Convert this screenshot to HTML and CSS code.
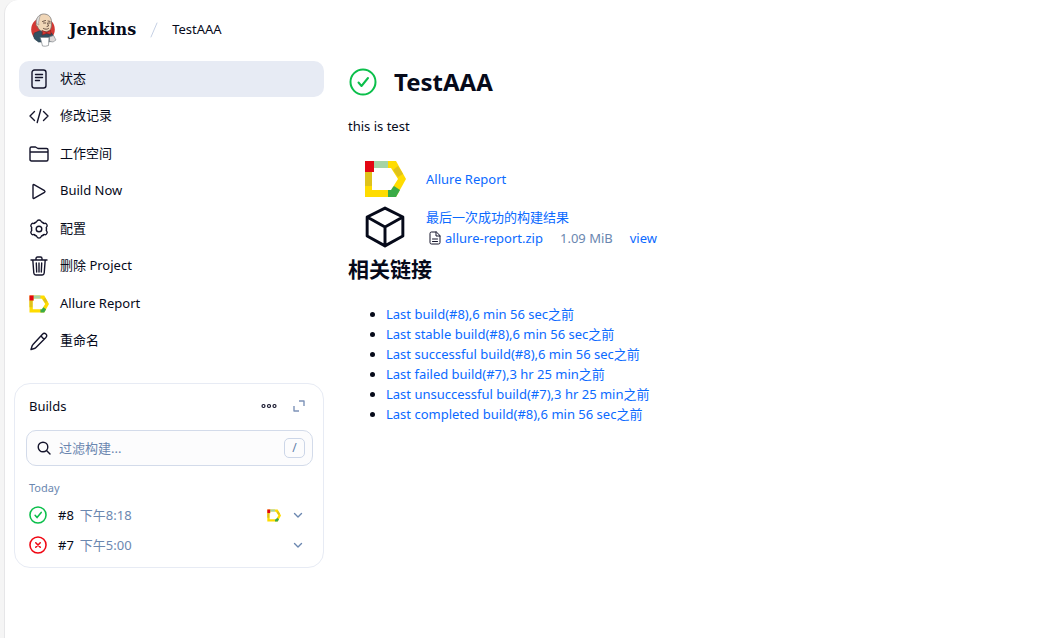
FILE: index.html
```html
<!DOCTYPE html>
<html lang="zh-CN">
<head>
  <meta charset="utf-8">
  <title>TestAAA [Jenkins]</title>
  <link rel="stylesheet" href="styles.css">
</head>
<body>

<!-- shared icons -->
<svg class="sprite" aria-hidden="true">
  <symbol id="allure" viewBox="0 0 42 38">
    <path fill="#ffdc00" d="M1 1h31l10 18-10 18H1z"/>
    <path fill="#e30613" d="M1 1h9v11H1z"/>
    <path fill="#a5d3a5" d="M10 1h14v7H10z"/>
    <path fill="#dfc21b" d="M1 12h7v14H1zM29 10l5-4 5 8-5 3z"/>
    <path fill="#3aab47" d="M24 30l6-4 6 4-4 7h-8z"/>
    <path fill="#fff" d="M10 12V8h17l7 11-7 11H8V12z"/>
  </symbol>
  <symbol id="success" viewBox="0 0 28 28">
    <circle cx="14" cy="14" r="12.5"/>
    <path d="M9.5 14.5l3 3.5 6.5-8"/>
  </symbol>
  <symbol id="chevron" viewBox="0 0 10 10">
    <path d="M1.5 3.5L5 7l3.5-3.5"/>
  </symbol>
</svg>

<div class="page">
  <header class="header">
    <a class="brand" href="#">
      <svg class="logo" viewBox="0 0 26 34">
        <ellipse cx="12.500" cy="16.500" rx="11.800" ry="12" fill="#d33833"/>
        <path fill="#335061" stroke="#263b49" stroke-width=".6" d="M4 20l6-2.500 5 3 6-.5 2.500 4-1 4-5 1H8l-4-3-1-3z"/>
        <path fill="#f0d6b7" stroke="#6d6b6d" stroke-width=".7" d="M6 7c1-4.500 5-6.300 8-6 4.500.4 7 3.500 7 8s.3 9-5.500 9.500C11 19 8 17 7 13.500 5.500 13 5 11 6 10z"/>
        <path fill="#dfdedc" stroke="#8a8584" stroke-width=".5" d="M5.700 9c.3-4 2.300-6.500 4.300-7-1 2-1 3.500-1.500 5.500-.5 1.500-.5 3 0 4.500-1.800-.5-2.600-1.500-2.800-3z"/>
        <path fill="none" stroke="#49332b" stroke-width=".8" d="M12 8.500l3-1M17.500 8l2 .4M13 10h2.200M18 10h1.700M17 10l1 3-1.500.5M13 15.500c2 1 3.500 1 5 0"/>
        <path fill="#d33833" stroke="#701b18" stroke-width=".5" d="M12 17.500l4 2 4-2 .5 4-4.500-1-4 1.500z"/>
        <path fill="#dcd9d8" stroke="#81868b" stroke-width=".6" d="M19 24l4-1.500L25.500 27l-3 2-3.500-.5z"/>
        <path fill="#fff" stroke="#81868b" stroke-width=".7" d="M10 24.500h8.500L18 32.500q-3 1.200-6 .5l-1-4z"/>
      </svg>
      <span>Jenkins</span>
    </a>
    <span class="slash">
      <svg viewBox="0 0 8 16"><path d="M7 1L1 15"/></svg>
    </span>
    <a class="crumb" href="#">TestAAA</a>
  </header>

  <div class="columns">
    <aside class="side">
      <nav class="tasks">
        <a class="task active" href="#">
          <svg class="icon" viewBox="0 0 20 20"><rect x="3" y="1" width="14" height="18" rx="2.500"/><path d="M6.500 5.500h7M6.500 8.500h7M6.500 11.500h4"/></svg>
          <span>状态</span>
        </a>
        <a class="task" href="#">
          <svg class="icon" viewBox="0 0 20 20"><path d="M5.500 5.500L1 10l4.500 4.500M14.500 5.500L19 10l-4.500 4.500M11.800 3.500L8.200 16.500"/></svg>
          <span>修改记录</span>
        </a>
        <a class="task" href="#">
          <svg class="icon" viewBox="0 0 20 20"><path d="M1 15V4.500Q1 3 2.500 3h4L9 4.500h8.500Q19 4.500 19 6v9.500q0 1.500-1.500 1.500h-15Q1 17 1 15.500zM1 8h18"/></svg>
          <span>工作空间</span>
        </a>
        <a class="task" href="#">
          <svg class="icon" viewBox="0 0 20 20"><path d="M4 4.200v12.600q0 1 1 .5l10.500-6q1-.8 0-1.600L5 3.700q-1-.5-1 .5z"/></svg>
          <span>Build Now</span>
        </a>
        <a class="task" href="#">
          <svg class="icon" viewBox="0 0 20 20">
            <path id="lobe" d="M6.250 3.500Q7.700 3.400 8 2.200 8.300 1 10 1t2 1.200q.3 1.200 1.750 1.300"/>
            <use href="#lobe" transform="rotate(60 10 10)"/>
            <use href="#lobe" transform="rotate(120 10 10)"/>
            <use href="#lobe" transform="rotate(180 10 10)"/>
            <use href="#lobe" transform="rotate(240 10 10)"/>
            <use href="#lobe" transform="rotate(300 10 10)"/>
            <circle cx="10" cy="10" r="2.800"/>
          </svg>
          <span>配置</span>
        </a>
        <a class="task" href="#">
          <svg class="icon" viewBox="0 0 20 20"><path d="M2 4h16M3.800 4l1 13q.2 2 2 2h6.400q1.800 0 2-2l1-13M7 4V2.500Q7 1 8.500 1h3Q13 1 13 2.500V4M7.300 7l.4 9M10 7v9M12.700 7l-.4 9"/></svg>
          <span>删除 Project</span>
        </a>
        <a class="task" href="#">
          <svg class="icon allure"><use href="#allure"/></svg>
          <span>Allure Report</span>
        </a>
        <a class="task" href="#">
          <svg class="icon" viewBox="0 0 20 20"><path d="M13.500 3.200q1.700-1.700 3.400-.1t0 3.400L7 16.500q-.7.700-1.700 1L2 18.500l1-3.300q.3-1 1-1.700zM12 5l3 3.200"/></svg>
          <span>重命名</span>
        </a>
      </nav>

      <section class="builds">
        <div class="builds-head">
          <h2>Builds</h2>
          <button class="tool" aria-label="More">
            <svg class="dots" viewBox="0 0 16 6"><circle cx="2.500" cy="3" r="1.500"/><circle cx="8" cy="3" r="1.500"/><circle cx="13.500" cy="3" r="1.500"/></svg>
          </button>
          <button class="tool" aria-label="Expand">
            <svg class="expand" viewBox="0 0 12 12"><path d="M6 1h5v5M6 11H1V6"/></svg>
          </button>
        </div>
        <label class="search">
          <svg viewBox="0 0 14 14"><circle cx="6" cy="6" r="4.800"/><path d="M9.500 9.500L13 13"/></svg>
          <input type="text" placeholder="过滤构建..." aria-label="过滤构建">
          <kbd>/</kbd>
        </label>
        <p class="day">Today</p>
        <div class="build">
          <svg class="status ok"><use href="#success"/></svg>
          <a href="#">#8</a>
          <time>下午8:18</time>
          <svg class="badge"><use href="#allure"/></svg>
          <button class="more" aria-label="#8"><svg><use href="#chevron"/></svg></button>
        </div>
        <div class="build">
          <svg class="status fail" viewBox="0 0 28 28"><circle cx="14" cy="14" r="12.500"/><path d="M10.500 10.500l7 7M17.500 10.500l-7 7"/></svg>
          <a href="#">#7</a>
          <time>下午5:00</time>
          <button class="more" aria-label="#7"><svg><use href="#chevron"/></svg></button>
        </div>
      </section>
    </aside>

    <main class="main">
      <div class="title">
        <svg class="ok"><use href="#success"/></svg>
        <h1>TestAAA</h1>
      </div>
      <p class="description">this is test</p>

      <div class="summary">
        <svg class="big-allure"><use href="#allure"/></svg>
        <a href="#">Allure Report</a>
        <svg class="box" viewBox="0 0 40 40"><path d="M20 2l17 8.500v18L20 38 3 28.500v-18zM3 10.500L20 20l17-9.500M20 20v18"/></svg>
        <div>
          <a href="#">最后一次成功的构建结果</a>
          <div class="artifact">
            <svg class="file" viewBox="0 0 12 14"><path d="M7 1H2.500Q1 1 1 2.500v9Q1 13 2.500 13h7q1.500 0 1.500-1.500V5zM7 1v4h4M3.500 8h5M3.500 10.500h5"/></svg>
            <a href="#">allure-report.zip</a>
            <span class="size">1.09 MiB</span>
            <a href="#">view</a>
          </div>
        </div>
      </div>

      <h2 class="links-title">相关链接</h2>
      <ul class="links">
        <li><a href="#">Last build(#8),6 min 56 sec之前</a></li>
        <li><a href="#">Last stable build(#8),6 min 56 sec之前</a></li>
        <li><a href="#">Last successful build(#8),6 min 56 sec之前</a></li>
        <li><a href="#">Last failed build(#7),3 hr 25 min之前</a></li>
        <li><a href="#">Last unsuccessful build(#7),3 hr 25 min之前</a></li>
        <li><a href="#">Last completed build(#8),6 min 56 sec之前</a></li>
      </ul>
    </main>
  </div>
</div>

</body>
</html>
```
FILE: styles.css
```css
* {
  box-sizing: border-box;
}

body {
  margin: 0;
  padding-left: 4px;
  background: #f5f5f5;
  color: #060a1a;
  font: 13px/20px "Noto Sans", "Noto Sans CJK SC", sans-serif;
}

a {
  color: #0b6aff;
  text-decoration: none;
}

svg {
  display: block;
  flex: none;
  fill: none;
  stroke-linecap: round;
  stroke-linejoin: round;
}

h1, h2, p, ul {
  margin: 0;
}

button {
  padding: 0;
  border: 0;
  background: none;
}

.sprite {
  position: absolute;
  width: 0;
  height: 0;
}

.page {
  min-height: 100vh;
  border-left: 1px solid #e6e6e8;
  border-radius: 14px 0 0 0;
  background: #fff;
}

/* header */
.header {
  display: flex;
  align-items: center;
  height: 60px;
  padding-left: 25px;
}

.brand {
  display: flex;
  align-items: center;
  gap: 12px;
  color: #060a1a;
  font: bold 16px/20px "DejaVu Serif", serif;
}

.logo {
  width: 27px;
  height: 34px;
}

.slash svg {
  width: 8px;
  height: 16px;
  margin: 0 14px;
  stroke: #c5d0e4;
}

.crumb {
  padding-bottom: 2px;
  color: #060a1a;
}

.columns {
  display: flex;
  gap: 24px;
  padding-left: 9px;
}

/* side panel */
.side {
  flex: none;
  width: 310px;
}

.tasks {
  display: flex;
  flex-direction: column;
  justify-content: space-between;
  min-height: 299px;
  margin: 1px 0 0 5px;
}

.task {
  display: flex;
  align-items: center;
  gap: 11px;
  height: 36px;
  padding: 0 10px 1px;
  border-radius: 10px;
  color: #060a1a;
}

.task span {
  padding-bottom: 2px;
}

.task.active {
  background: #e7ebf4;
}

.icon {
  width: 20px;
  height: 20px;
  stroke: #14142b;
  stroke-width: 1.4;
}

.icon.allure {
  stroke: none;
}

.builds {
  margin-top: 23px;
  padding: 6px 10px 7px 11px;
  border: 1px solid #e7ebf4;
  border-radius: 16px;
}

.builds-head {
  display: flex;
  align-items: center;
  gap: 16px;
  height: 32px;
  padding: 0 8px 0 3px;
}

.builds-head h2 {
  flex: 1;
  font-size: 13px;
  font-weight: 400;
}

.dots {
  width: 16px;
  height: 6px;
  stroke: #14142b;
  stroke-width: 1.2;
}

.expand {
  width: 12px;
  height: 12px;
  stroke: #7d93b8;
  stroke-linecap: butt;
  stroke-width: 1.4;
}

.search {
  display: flex;
  align-items: center;
  gap: 8px;
  height: 36px;
  margin-top: 8px;
  padding: 0 7px 0 10px;
  border: 1px solid #d3dbea;
  border-radius: 10px;
  background: #fcfcfd;
}

.search svg {
  width: 14px;
  height: 14px;
  stroke: #14142b;
  stroke-width: 1.4;
}

.search input {
  flex: 1;
  min-width: 0;
  padding: 0;
  border: 0;
  outline: 0;
  background: none;
  font: inherit;
}

.search input::placeholder {
  color: #6b87b0;
}

kbd {
  width: 21px;
  height: 20px;
  border: 1px solid #ccd6e8;
  border-radius: 5px;
  color: #5f7ca8;
  font: 12px/18px "Noto Sans", sans-serif;
  text-align: center;
}

.day {
  margin: 14px 0 0 3px;
  color: #6b87b0;
  font-size: 11px;
  line-height: 16px;
}

.build {
  display: flex;
  align-items: center;
  height: 30px;
  padding: 0 10px 0 3px;
}

.day + .build {
  margin-top: 4px;
}

.build a {
  margin: 0 6px 0 11px;
  color: #060a1a;
}

.build time {
  flex: 1;
  color: #6b87b0;
}

.ok {
  stroke: #0bbf4b;
}

.fail {
  stroke: #f00612;
}

.status {
  width: 18px;
  height: 18px;
  stroke-width: 2.4;
}

.badge {
  width: 14px;
  height: 13px;
}

.more svg {
  width: 10px;
  height: 10px;
  margin-left: 12px;
  stroke: #6b87b0;
  stroke-width: 1.4;
}

/* main panel */
.main {
  flex: 1;
  padding-top: 2px;
}

.title {
  display: flex;
  align-items: center;
  gap: 16px;
  height: 40px;
}

.title svg {
  width: 30px;
  height: 28px;
  stroke-width: 2;
}

.title h1 {
  font-size: 24px;
  line-height: 32px;
}

.description {
  margin-top: 14px;
}

.summary {
  display: grid;
  grid-template-columns: 48px 1fr;
  align-items: center;
  gap: 8px 17px;
  margin: 24px 0 0 13px;
}

.summary > svg {
  justify-self: center;
}

.big-allure {
  width: 42px;
  height: 38px;
}

.box {
  width: 42px;
  height: 42px;
  stroke: #060a1a;
  stroke-width: 2.8;
}

.artifact {
  display: flex;
  align-items: center;
  padding: 1px 0 0 3px;
}

.file {
  width: 12px;
  height: 14px;
  margin-right: 4px;
  stroke: #14142b;
}

.size {
  margin: 0 17px;
  color: #6b87b0;
}

.links-title {
  margin-top: 9px;
  font-size: 21px;
  line-height: 24px;
}

.links {
  margin-top: 23px;
  padding-left: 38px;
}
```
